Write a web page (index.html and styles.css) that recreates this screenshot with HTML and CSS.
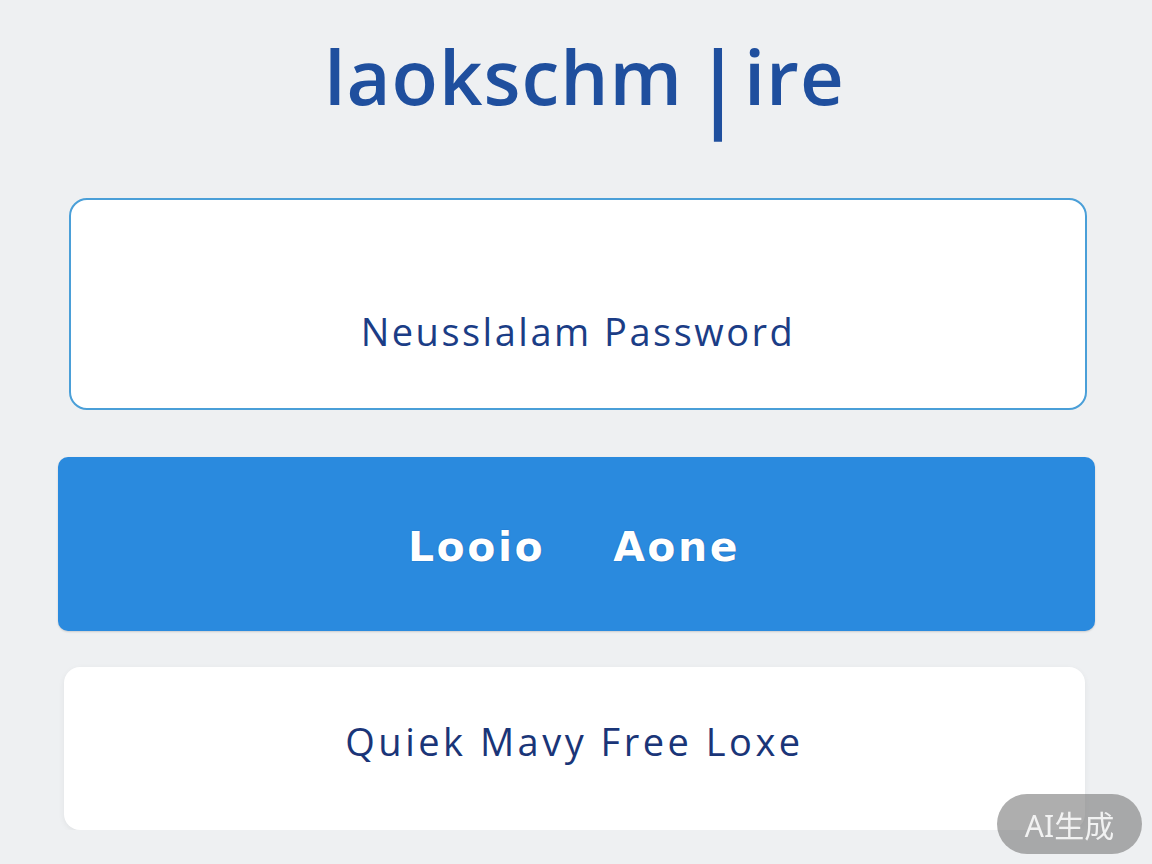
FILE: index.html
```html
<!DOCTYPE html>
<html lang="en">
<head>
    <meta charset="UTF-8">
    <meta name="viewport" content="width=device-width, initial-scale=1.0">
    <title>Login</title>
    <link rel="stylesheet" href="styles.css">
</head>
<body>
    <div class="page">
        <!-- Başlık -->
        <h1 class="brand">laokschm<span class="bar">|</span>ire</h1>

        <!-- Şifre alanı -->
        <div class="field">
            <span class="field-label">Neusslalam Password</span>
        </div>

        <!-- Giriş butonu -->
        <button class="login-btn" type="button">
            <span>Looio</span>
            <span>Aone</span>
        </button>

        <!-- Alt kart -->
        <div class="quick-card">
            <span class="quick-text">Quiek Mavy Free Loxe</span>
        </div>
    </div>

    <div class="ai-badge">AI生成</div>
</body>
</html>
```

FILE: styles.css
```css
body {
    font-family: 'Open Sans', 'Noto Sans', sans-serif;
    background: #eef0f2;
    margin: 0;
    padding: 0;
    color: #1a3a80;
}

.page {
    padding: 0 57px 0 58px;
    display: flex;
    flex-direction: column;
}

.brand {
    margin: 0;
    height: 198px;
    display: flex;
    align-items: center;
    justify-content: center;
    padding: 0 0 48px 16px;
    box-sizing: border-box;
    font-size: 76px;
    font-weight: 600;
    color: #1f4f9e;
    letter-spacing: 1px;
}

.brand .bar {
    display: inline-block;
    transform: scaleY(1.25) translateY(6px);
    margin: 0 4px 0 14px;
    font-weight: 700;
}

.field {
    margin: 0 8px 0 11px;
    height: 212px;
    box-sizing: border-box;
    background: #fff;
    border: 2px solid #4a9fd8;
    border-radius: 18px;
    display: flex;
    align-items: center;
    justify-content: center;
    padding-top: 54px;
}

.field-label {
    font-size: 38px;
    letter-spacing: 2.5px;
    color: #1b3d86;
}

.login-btn {
    margin-top: 47px;
    height: 174px;
    border: none;
    border-radius: 10px;
    background: #2a8ade;
    color: #fff;
    font-family: 'DejaVu Sans', sans-serif;
    font-weight: 700;
    font-size: 41px;
    letter-spacing: 2.5px;
    display: flex;
    align-items: center;
    justify-content: center;
    gap: 68px;
    box-shadow: 0 1px 2px rgba(0, 0, 0, 0.15);
    padding: 6px 5px 0 0;
    text-shadow: 0 0 1px rgba(0, 40, 120, 0.7);
}

.quick-card {
    margin: 36px 10px 0 6px;
    height: 163px;
    background: #fff;
    border-radius: 16px;
    box-shadow: 0 2px 6px rgba(0, 0, 0, 0.06);
    display: flex;
    align-items: center;
    justify-content: center;
    padding-bottom: 16px;
    box-sizing: border-box;
}

.quick-text {
    font-size: 38px;
    letter-spacing: 3.5px;
    color: #1a3578;
}

.ai-badge {
    position: fixed;
    right: 10px;
    bottom: 10px;
    width: 145px;
    height: 60px;
    border-radius: 30px;
    background: rgba(120, 120, 120, 0.6);
    color: rgba(255, 255, 255, 0.85);
    font-family: 'Noto Sans', 'Noto Sans CJK SC', sans-serif;
    font-size: 30px;
    display: flex;
    align-items: center;
    justify-content: center;
}
```
